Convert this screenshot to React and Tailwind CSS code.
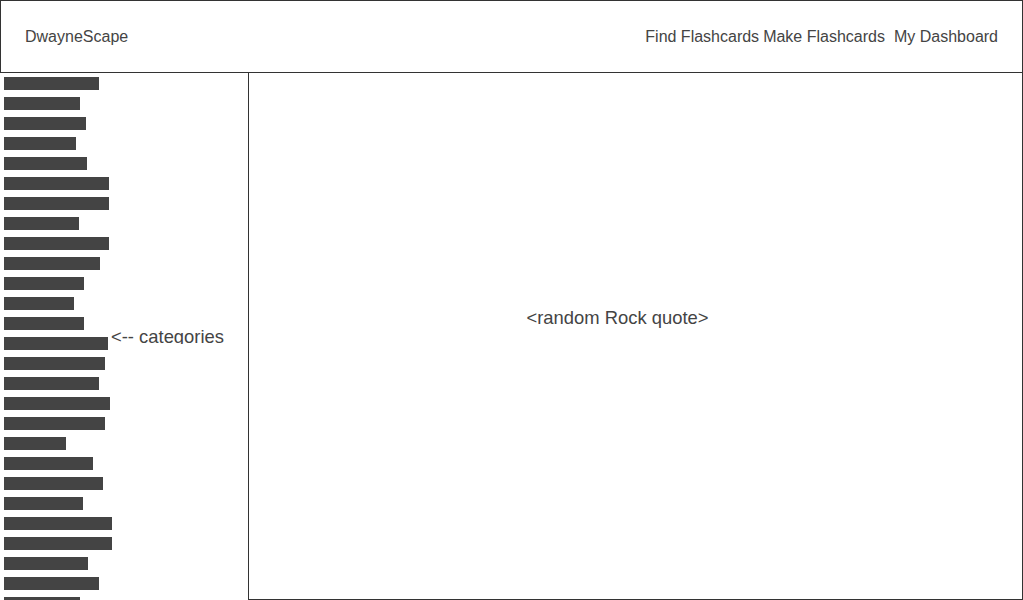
export default function App() {
  const bars = [95, 76, 82, 72, 83, 105, 105, 75, 105, 96, 80, 70, 80, 104, 101, 95, 106, 101, 62, 89, 99, 79, 108, 108, 84, 95, 76]

  return (
    <div
      className="relative w-[1023px] h-[600px] overflow-hidden bg-white text-[#444]"
      style={{ fontFamily: '"Liberation Sans", Arial, sans-serif' }}
    >
      {/* Header */}
      <div className="h-[73px] border border-[#333] flex items-center justify-between pl-6 pr-6 text-[16px]">
        <span>DwayneScape</span>
        <nav className="flex items-center">
          <span>Find Flashcards</span>
          <span className="ml-[4px]">Make Flashcards</span>
          <span className="ml-[9px]">My Dashboard</span>
        </nav>
      </div>

      <div className="flex h-[527px]">
        {/* Sidebar */}
        <div className="w-[248px] shrink-0 flex flex-col gap-[7px] pt-[4px] pl-[4px]">
          {bars.map((w, i) => (
            <div key={i} className="h-[13px] bg-[#444] shrink-0" style={{ width: w }} />
          ))}
        </div>

        {/* Main */}
        <div className="flex-1 border-l border-r border-b border-[#333] flex items-center justify-center pr-[36px] pb-[37px] text-[18.4px]">
          &lt;random Rock quote&gt;
        </div>
      </div>

      <div className="absolute left-[111px] top-[327px] h-[17px] overflow-hidden text-[18.4px] leading-[20px]">
        &lt;-- categories
      </div>
    </div>
  )
}
